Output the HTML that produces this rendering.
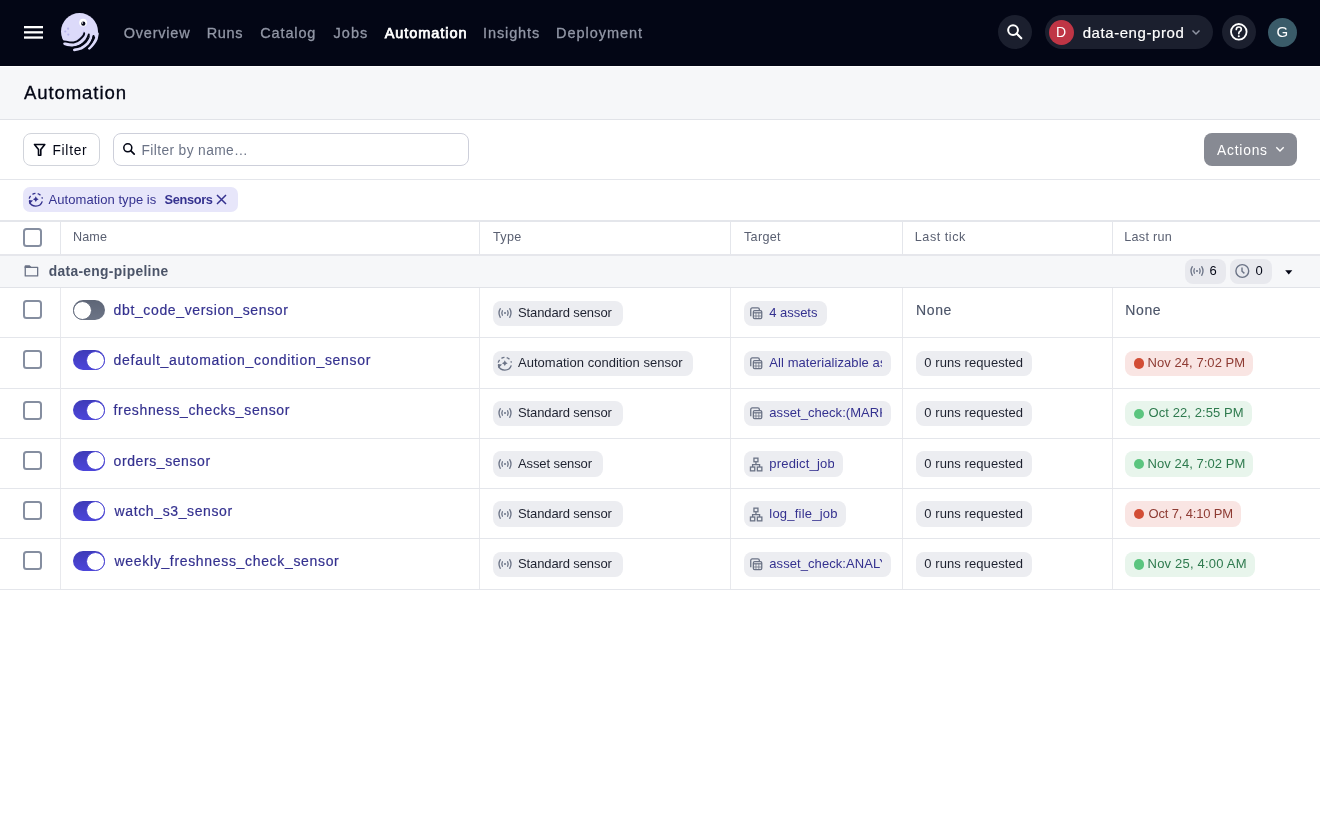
<!DOCTYPE html>
<html><head><meta charset="utf-8"><style>
html,body{margin:0;padding:0;width:1320px;height:822px;overflow:hidden;background:#fff;font-family:"Liberation Sans", sans-serif;}
.t{position:absolute;white-space:nowrap;line-height:1.117;}
</style></head><body><div id="root" style="position:absolute;left:0;top:0;width:1320px;height:822px;overflow:hidden;will-change:transform">
<div style="position:absolute;left:0px;top:0px;width:1320px;height:66px;background:#030615"></div>
<svg style="position:absolute;left:0;top:0" width="60" height="66"><g fill="#fff"><rect x="24" y="26" width="19" height="2.3"/><rect x="24" y="31.2" width="19" height="2.3"/><rect x="24" y="36.4" width="19" height="2.3"/></g></svg>
<svg style="position:absolute;left:55px;top:8px" width="50" height="50" viewBox="0 0 50 50">
<clipPath id="lgc"><path d="M0 0 H50 V33 L41.4 30.6 L38.6 27.6 L35.5 27 L33.5 26.7 Q33 28.5 30.8 30.6 Q28.4 32.8 24.7 35.2 Q21.5 37.3 17.1 37.3 Q13 37 9.6 35.6 L0 35 Z"/></clipPath><circle cx="24.5" cy="23.6" r="18.5" fill="#DCDAFA" clip-path="url(#lgc)"/>
<path d="M22.5 31 Q27.5 28 28.3 22.6 Q30.6 23.5 29.6 27.5 Q28 32 23.5 33 Z" fill="#C9C6F5"/>
<g stroke="#DCDAFA" stroke-width="2.8" fill="none" stroke-linecap="round">
<path d="M9.6 35.6 Q13 37 17.1 37.3 Q21.5 37.3 24.7 35.2 Q28.4 32.8 30.8 30.6 Q33 28.5 33.5 26.7 L34 23.5"/>
<path d="M19.4 41.8 Q23 41.4 26.2 40.3 Q29.6 38.5 32.3 35.8 Q34.6 33 35.9 30 L37 24.5"/>
<path d="M34.3 40.2 Q36.6 38.3 38.3 36 Q40.2 33.5 41.4 30.6 L42.4 25.5"/>
</g>
<g stroke="#030615" stroke-width="1.9" fill="none" stroke-linecap="round">
<path d="M7 33.3 L11.1 33.6 Q15 34.6 18.6 34.5 Q22.5 33.8 24.7 31.5 Q27.6 28.8 28.6 27.4 Q29.2 26.2 29.2 25.2"/>
<path d="M11 39.3 Q16.5 39.9 18.6 39.4 Q22 38.8 24.7 37.9 Q28.4 35.7 30.8 32.7 Q32.8 29.8 33.8 26.4"/>
<path d="M31 40.5 Q32.6 39.4 33.8 38.2 Q35.6 36 36.8 33.6 Q38 30.8 38.6 27.9"/>
</g>
<circle cx="28.1" cy="14.6" r="3.9" fill="#fff"/>
<circle cx="28.3" cy="15.7" r="2.1" fill="#030615"/>
<circle cx="27.5" cy="15" r="0.7" fill="#fff"/>
<g fill="#B8B4EE"><circle cx="13.1" cy="20.7" r="1.1"/><circle cx="10.3" cy="23.5" r="1.1"/><circle cx="13.3" cy="26.6" r="1.1"/></g>
</svg>
<div class="t" style="left:123.70px;top:24.78px;font-size:14.5px;color:#9297A6;font-weight:400;letter-spacing:0.792px;-webkit-text-stroke:0.3px #9297A6">Overview</div>
<div class="t" style="left:206.70px;top:24.78px;font-size:14.5px;color:#9297A6;font-weight:400;letter-spacing:0.667px;-webkit-text-stroke:0.3px #9297A6">Runs</div>
<div class="t" style="left:260.30px;top:24.78px;font-size:14.5px;color:#9297A6;font-weight:400;letter-spacing:0.848px;-webkit-text-stroke:0.3px #9297A6">Catalog</div>
<div class="t" style="left:333.50px;top:24.78px;font-size:14.5px;color:#9297A6;font-weight:400;letter-spacing:1.041px;-webkit-text-stroke:0.3px #9297A6">Jobs</div>
<div class="t" style="left:384.70px;top:24.78px;font-size:14.5px;color:#fff;font-weight:400;letter-spacing:0.946px;-webkit-text-stroke:0.75px #fff">Automation</div>
<div class="t" style="left:483.00px;top:24.78px;font-size:14.5px;color:#9297A6;font-weight:400;letter-spacing:0.897px;-webkit-text-stroke:0.3px #9297A6">Insights</div>
<div class="t" style="left:556.00px;top:24.78px;font-size:14.5px;color:#9297A6;font-weight:400;letter-spacing:0.962px;-webkit-text-stroke:0.3px #9297A6">Deployment</div>
<div style="position:absolute;left:998px;top:15px;width:34px;height:34px;background:#1B1F2E;border-radius:50%"></div>
<svg style="position:absolute;left:998px;top:15px" width="34" height="34"><circle cx="15.05" cy="15.05" r="4.9" stroke="#fff" stroke-width="2" fill="none"/><path d="M18.6 18.6 L23.3 23.3" stroke="#fff" stroke-width="2.1" stroke-linecap="round"/></svg>
<div style="position:absolute;left:1045px;top:15px;width:168px;height:34px;background:#1B1F2E;border-radius:17px"></div>
<div style="position:absolute;left:1048.5px;top:19.5px;width:25.5px;height:25.5px;background:#BF3545;border-radius:50%"></div>
<div class="t" style="left:1056.00px;top:25.03px;font-size:14px;color:#fff;font-weight:400;letter-spacing:0.000px;">D</div>
<div class="t" style="left:1082.70px;top:24.82px;font-size:15px;color:#fff;font-weight:400;letter-spacing:0.567px;-webkit-text-stroke:0.2px #fff">data-eng-prod</div>
<svg style="position:absolute;left:1188px;top:26px" width="16" height="12"><path d="M4.5 4.5 L8 8 L11.5 4.5" stroke="#8F94A3" stroke-width="1.5" fill="none"/></svg>
<div style="position:absolute;left:1222px;top:15px;width:34px;height:34px;background:#1B1F2E;border-radius:50%"></div>
<svg style="position:absolute;left:1222px;top:15px" width="34" height="34"><circle cx="16.8" cy="16.8" r="7.8" stroke="#fff" stroke-width="1.8" fill="none"/><path d="M14.3 14.5 Q14.3 12 16.8 12 Q19.3 12 19.3 14.3 Q19.3 15.8 17.8 16.5 Q16.8 17 16.8 18.6" stroke="#fff" stroke-width="1.7" fill="none" stroke-linecap="round"/><circle cx="16.8" cy="21.3" r="1.05" fill="#fff"/></svg>
<div style="position:absolute;left:1267.5px;top:17.5px;width:29.5px;height:29.5px;background:#3A5B69;border-radius:50%"></div>
<div class="t" style="left:1276.50px;top:24.42px;font-size:15px;color:#fff;font-weight:400;letter-spacing:0.000px;">G</div>
<div style="position:absolute;left:0px;top:66px;width:1320px;height:53px;background:#F6F7F9;border-top:1px solid #fff;box-sizing:border-box"></div>
<div style="position:absolute;left:0px;top:119px;width:1320px;height:1px;background:#E1E3E8"></div>
<div class="t" style="left:23.90px;top:83.17px;font-size:18.6px;color:#030615;font-weight:400;letter-spacing:0.898px;-webkit-text-stroke:0.3px #030615">Automation</div>
<div style="position:absolute;left:23px;top:133px;width:77px;height:33px;box-sizing:border-box;border:1px solid #D1D4DB;border-radius:8px;background:#fff"></div>
<svg style="position:absolute;left:33px;top:143px" width="14" height="14"><path d="M1.5 1.5 H11.8 L7.8 6.6 V12.3 H5.5 V6.6 Z" stroke="#030615" stroke-width="1.6" fill="none" stroke-linejoin="round"/></svg>
<div class="t" style="left:52.40px;top:142.71px;font-size:13.8px;color:#030615;font-weight:400;letter-spacing:0.727px;">Filter</div>
<div style="position:absolute;left:113px;top:133px;width:356px;height:33px;box-sizing:border-box;border:1px solid #CDCFDA;border-radius:8px;background:#fff"></div>
<svg style="position:absolute;left:121px;top:141px" width="16" height="16"><circle cx="6.8" cy="6.8" r="4" stroke="#030615" stroke-width="1.55" fill="none"/><path d="M9.7 9.7 L13.2 13.2" stroke="#030615" stroke-width="1.7" stroke-linecap="round"/></svg>
<div class="t" style="left:141.50px;top:142.71px;font-size:13.8px;color:#6B7386;font-weight:400;letter-spacing:0.371px;">Filter by name…</div>
<div style="position:absolute;left:1204px;top:133px;width:93px;height:33px;background:#878A93;border-radius:8px"></div>
<div class="t" style="left:1217.10px;top:142.81px;font-size:13.8px;color:#fff;font-weight:400;letter-spacing:0.776px;">Actions</div>
<svg style="position:absolute;left:1274px;top:144px" width="12" height="10"><path d="M2.3 3.3 L6 7 L9.7 3.3" stroke="#fff" stroke-width="1.4" fill="none"/></svg>
<div style="position:absolute;left:0px;top:179px;width:1320px;height:1px;background:#E4E6EB"></div>
<div style="position:absolute;left:23px;top:187px;width:215px;height:25px;background:#E7E6FA;border-radius:7px"></div>
<svg style="position:absolute;left:27.7px;top:191.4px" width="16" height="16" viewBox="0 0 16 16"><g stroke="#35328F" stroke-width="1.35" fill="none"><path d="M1.3 10.2 A6.8 6.8 0 0 0 14.3 10.4"/><path d="M1.2 7.6 A6.8 6.8 0 0 1 14.4 7.6" stroke-dasharray="3.1 2.3"/></g><path d="M7.8 5.3 Q8.4 7.6 10.7 8.2 Q8.4 8.8 7.8 11.1 Q7.2 8.8 4.9 8.2 Q7.2 7.6 7.8 5.3 Z" fill="#35328F"/><path d="M0.9 8.9 L5.1 9.5 L1.3 13.3 Z" fill="#35328F"/></svg>
<div class="t" style="left:48.60px;top:192.83px;font-size:13px;color:#35328F;font-weight:400;letter-spacing:0.044px;">Automation type is</div>
<div class="t" style="left:164.50px;top:193.02px;font-size:12.8px;color:#35328F;font-weight:700;letter-spacing:-0.347px;">Sensors</div>
<svg style="position:absolute;left:215px;top:193px" width="13" height="13"><path d="M2 2 L11 11 M11 2 L2 11" stroke="#35328F" stroke-width="1.5"/></svg>
<div style="position:absolute;left:0px;top:220px;width:1320px;height:2px;background:#E4E6EB"></div>
<div style="position:absolute;left:60px;top:222px;width:1px;height:32px;background:#E4E6EB"></div>
<div style="position:absolute;left:479px;top:222px;width:1px;height:32px;background:#E4E6EB"></div>
<div style="position:absolute;left:730.3px;top:222px;width:1px;height:32px;background:#E4E6EB"></div>
<div style="position:absolute;left:902px;top:222px;width:1px;height:32px;background:#E4E6EB"></div>
<div style="position:absolute;left:1111.8px;top:222px;width:1px;height:32px;background:#E4E6EB"></div>
<div style="position:absolute;left:23px;top:228px;width:19px;height:19px;box-sizing:border-box;border:2px solid #858EA0;border-radius:3.5px;background:#fff"></div>
<div class="t" style="left:73.00px;top:230.40px;font-size:12.6px;color:#5A6072;font-weight:400;letter-spacing:0.137px;">Name</div>
<div class="t" style="left:493.00px;top:230.40px;font-size:12.6px;color:#5A6072;font-weight:400;letter-spacing:0.300px;">Type</div>
<div class="t" style="left:744.00px;top:230.40px;font-size:12.6px;color:#5A6072;font-weight:400;letter-spacing:0.300px;">Target</div>
<div class="t" style="left:914.80px;top:230.40px;font-size:12.6px;color:#5A6072;font-weight:400;letter-spacing:0.538px;">Last tick</div>
<div class="t" style="left:1124.20px;top:230.40px;font-size:12.6px;color:#5A6072;font-weight:400;letter-spacing:0.300px;">Last run</div>
<div style="position:absolute;left:0px;top:254px;width:1320px;height:2px;background:#E6E7EC"></div>
<div style="position:absolute;left:0px;top:256px;width:1320px;height:31px;background:#F6F7F9"></div>
<div style="position:absolute;left:0px;top:287px;width:1320px;height:1px;background:#E1E3E8"></div>
<svg style="position:absolute;left:23px;top:264px" width="17" height="15"><path d="M2.25 3.4 H14.65 V11.95 H2.25 Z" stroke="#6B7386" stroke-width="1.3" fill="none" stroke-linejoin="round"/><path d="M1.6 2.3 Q1.6 1.3 2.6 1.3 H6.6 L8.1 2.75 V4.05 H1.6 Z" fill="#6B7386"/></svg>
<div class="t" style="left:48.80px;top:263.61px;font-size:13.8px;color:#4B5468;font-weight:700;letter-spacing:0.322px;">data-eng-pipeline</div>
<div style="position:absolute;left:1185px;top:258.5px;width:41px;height:25.5px;background:#E8E9EE;border-radius:8px"></div>
<svg style="position:absolute;left:1189px;top:265px" width="16" height="12" viewBox="0 0 16 12"><g stroke="#6B7386" stroke-width="1.3" fill="none" stroke-linecap="round"><path d="M3.3 1.7 Q0.7 6 3.3 10.3"/><path d="M12.7 1.7 Q15.3 6 12.7 10.3"/><path d="M5.4 3.8 Q4.2 6 5.4 8.2"/><path d="M10.6 3.8 Q11.8 6 10.6 8.2"/></g><circle cx="8" cy="6" r="1.0" fill="#6B7386"/></svg>
<div class="t" style="left:1209.50px;top:263.94px;font-size:13px;color:#030615;font-weight:400;letter-spacing:0.000px;">6</div>
<div style="position:absolute;left:1230px;top:258.5px;width:41.5px;height:25.5px;background:#E8E9EE;border-radius:8px"></div>
<svg style="position:absolute;left:1234px;top:263px" width="16" height="16"><circle cx="8.3" cy="8" r="6.4" stroke="#6B7386" stroke-width="1.4" fill="none"/><path d="M8 4.5 V8.3 L10.4 10.4" stroke="#6B7386" stroke-width="1.4" fill="none"/></svg>
<div class="t" style="left:1255.50px;top:263.94px;font-size:13px;color:#030615;font-weight:400;letter-spacing:0.000px;">0</div>
<svg style="position:absolute;left:1284px;top:269px" width="10" height="7"><path d="M1.2 1.2 H8.3 L4.75 5.4 Z" fill="#030615"/></svg>
<div style="position:absolute;left:60px;top:288.0px;width:1px;height:50px;background:#E8E9ED"></div>
<div style="position:absolute;left:479px;top:288.0px;width:1px;height:50px;background:#E8E9ED"></div>
<div style="position:absolute;left:730.3px;top:288.0px;width:1px;height:50px;background:#E8E9ED"></div>
<div style="position:absolute;left:902px;top:288.0px;width:1px;height:50px;background:#E8E9ED"></div>
<div style="position:absolute;left:1111.8px;top:288.0px;width:1px;height:50px;background:#E8E9ED"></div>
<div style="position:absolute;left:0px;top:337.3px;width:1320px;height:1px;background:#E4E6EB"></div>
<div style="position:absolute;left:23px;top:300.2px;width:19px;height:19px;box-sizing:border-box;border:2px solid #858EA0;border-radius:3.5px;background:#fff"></div>
<div style="position:absolute;left:73px;top:300.0px;width:32px;height:20px;border-radius:10px;background:linear-gradient(#5E6677,#6C7486)"></div>
<div style="position:absolute;left:73px;top:300.5px;width:19px;height:19px;border-radius:50%;background:#fff;box-sizing:border-box;border:1px solid #646C7E"></div>
<div class="t" style="left:113.60px;top:302.83px;font-size:14px;color:#34318F;font-weight:400;letter-spacing:0.633px;-webkit-text-stroke:0.2px #34318F">dbt_code_version_sensor</div>
<div style="position:absolute;left:492.5px;top:300.5px;width:130px;height:25.5px;background:#ECEDF1;border-radius:8px"></div>
<svg style="position:absolute;left:497px;top:307.0px" width="16" height="12" viewBox="0 0 16 12"><g stroke="#6B7386" stroke-width="1.3" fill="none" stroke-linecap="round"><path d="M3.3 1.7 Q0.7 6 3.3 10.3"/><path d="M12.7 1.7 Q15.3 6 12.7 10.3"/><path d="M5.4 3.8 Q4.2 6 5.4 8.2"/><path d="M10.6 3.8 Q11.8 6 10.6 8.2"/></g><circle cx="8" cy="6" r="1.0" fill="#6B7386"/></svg>
<div class="t" style="left:518.00px;top:305.94px;font-size:13.0px;color:#1E2230;font-weight:400;letter-spacing:-0.112px;">Standard sensor</div>
<div style="position:absolute;left:744px;top:300.5px;width:83px;height:25.5px;background:#ECEDF1;border-radius:8px"></div>
<svg style="position:absolute;left:749.3px;top:305.8px" width="16" height="16" viewBox="0 0 16 16"><g fill="none" stroke="#6B7386" stroke-width="1.3"><path d="M1.75 10.2 V3.5 Q1.75 1.95 3.3 1.95 H8.8 Q10.35 1.95 10.35 3.5 V4.1"/><rect x="4.35" y="4.65" width="8.4" height="8.0" rx="1.3"/></g><g fill="#6B7386"><rect x="4" y="6.2" width="9" height="1.2"/><rect x="4" y="9.6" width="9" height="0.8"/><rect x="6.6" y="6.5" width="0.75" height="6.5"/><rect x="9.5" y="6.5" width="0.75" height="6.5"/></g></svg>
<div class="t" style="left:769.30px;top:305.94px;font-size:13.0px;color:#34318F;font-weight:400;letter-spacing:-0.045px;max-width:50px;overflow:hidden;white-space:nowrap">4 assets</div>
<div class="t" style="left:916.10px;top:303.03px;font-size:14px;color:#4B5468;font-weight:400;letter-spacing:0.606px;-webkit-text-stroke:0.15px #4B5468">None</div>
<div class="t" style="left:1125.30px;top:303.03px;font-size:14px;color:#4B5468;font-weight:400;letter-spacing:0.606px;-webkit-text-stroke:0.15px #4B5468">None</div>
<div style="position:absolute;left:60px;top:338.24px;width:1px;height:50px;background:#E8E9ED"></div>
<div style="position:absolute;left:479px;top:338.24px;width:1px;height:50px;background:#E8E9ED"></div>
<div style="position:absolute;left:730.3px;top:338.24px;width:1px;height:50px;background:#E8E9ED"></div>
<div style="position:absolute;left:902px;top:338.24px;width:1px;height:50px;background:#E8E9ED"></div>
<div style="position:absolute;left:1111.8px;top:338.24px;width:1px;height:50px;background:#E8E9ED"></div>
<div style="position:absolute;left:0px;top:387.54px;width:1320px;height:1px;background:#E4E6EB"></div>
<div style="position:absolute;left:23px;top:350.44px;width:19px;height:19px;box-sizing:border-box;border:2px solid #858EA0;border-radius:3.5px;background:#fff"></div>
<div style="position:absolute;left:73px;top:350.24px;width:32px;height:20px;border-radius:10px;background:linear-gradient(#3E3BB8,#4D46DA)"></div>
<div style="position:absolute;left:86px;top:350.74px;width:19px;height:19px;border-radius:50%;background:#fff;box-sizing:border-box;border:1px solid #4A44D4"></div>
<div class="t" style="left:113.60px;top:353.07px;font-size:14px;color:#34318F;font-weight:400;letter-spacing:0.710px;-webkit-text-stroke:0.2px #34318F">default_automation_condition_sensor</div>
<div style="position:absolute;left:492.5px;top:350.74px;width:200px;height:25.5px;background:#ECEDF1;border-radius:8px"></div>
<svg style="position:absolute;left:497px;top:354.74px" width="16" height="16" viewBox="0 0 16 16"><g stroke="#6B7386" stroke-width="1.35" fill="none"><path d="M1.3 10.2 A6.8 6.8 0 0 0 14.3 10.4"/><path d="M1.2 7.6 A6.8 6.8 0 0 1 14.4 7.6" stroke-dasharray="3.1 2.3"/></g><path d="M7.8 5.3 Q8.4 7.6 10.7 8.2 Q8.4 8.8 7.8 11.1 Q7.2 8.8 4.9 8.2 Q7.2 7.6 7.8 5.3 Z" fill="#6B7386"/><path d="M0.9 8.9 L5.1 9.5 L1.3 13.3 Z" fill="#6B7386"/></svg>
<div class="t" style="left:518.00px;top:356.18px;font-size:13.0px;color:#1E2230;font-weight:400;letter-spacing:0.023px;">Automation condition sensor</div>
<div style="position:absolute;left:744px;top:350.74px;width:146.5px;height:25.5px;background:#ECEDF1;border-radius:8px"></div>
<svg style="position:absolute;left:749.3px;top:356.04px" width="16" height="16" viewBox="0 0 16 16"><g fill="none" stroke="#6B7386" stroke-width="1.3"><path d="M1.75 10.2 V3.5 Q1.75 1.95 3.3 1.95 H8.8 Q10.35 1.95 10.35 3.5 V4.1"/><rect x="4.35" y="4.65" width="8.4" height="8.0" rx="1.3"/></g><g fill="#6B7386"><rect x="4" y="6.2" width="9" height="1.2"/><rect x="4" y="9.6" width="9" height="0.8"/><rect x="6.6" y="6.5" width="0.75" height="6.5"/><rect x="9.5" y="6.5" width="0.75" height="6.5"/></g></svg>
<div class="t" style="left:769.30px;top:356.18px;font-size:13.0px;color:#34318F;font-weight:400;letter-spacing:0.075px;max-width:113px;overflow:hidden;white-space:nowrap">All materializable assets</div>
<div style="position:absolute;left:916px;top:350.74px;width:116px;height:25.5px;background:#ECEDF1;border-radius:8px"></div>
<div class="t" style="left:924.30px;top:356.18px;font-size:13.0px;color:#1E2230;font-weight:400;letter-spacing:0.078px;">0 runs requested</div>
<div style="position:absolute;left:1125px;top:350.74px;width:128px;height:25.5px;background:#F9E5E3;border-radius:8px"></div>
<div style="position:absolute;left:1133.7px;top:358.44px;width:10.3px;height:10.3px;background:#D24D35;border-radius:50%"></div>
<div class="t" style="left:1147.60px;top:356.18px;font-size:13.0px;color:#8E3B33;font-weight:400;letter-spacing:0.050px;">Nov 24, 7:02 PM</div>
<div style="position:absolute;left:60px;top:388.48px;width:1px;height:50px;background:#E8E9ED"></div>
<div style="position:absolute;left:479px;top:388.48px;width:1px;height:50px;background:#E8E9ED"></div>
<div style="position:absolute;left:730.3px;top:388.48px;width:1px;height:50px;background:#E8E9ED"></div>
<div style="position:absolute;left:902px;top:388.48px;width:1px;height:50px;background:#E8E9ED"></div>
<div style="position:absolute;left:1111.8px;top:388.48px;width:1px;height:50px;background:#E8E9ED"></div>
<div style="position:absolute;left:0px;top:437.78px;width:1320px;height:1px;background:#E4E6EB"></div>
<div style="position:absolute;left:23px;top:400.68px;width:19px;height:19px;box-sizing:border-box;border:2px solid #858EA0;border-radius:3.5px;background:#fff"></div>
<div style="position:absolute;left:73px;top:400.48px;width:32px;height:20px;border-radius:10px;background:linear-gradient(#3E3BB8,#4D46DA)"></div>
<div style="position:absolute;left:86px;top:400.98px;width:19px;height:19px;border-radius:50%;background:#fff;box-sizing:border-box;border:1px solid #4A44D4"></div>
<div class="t" style="left:113.60px;top:403.31px;font-size:14px;color:#34318F;font-weight:400;letter-spacing:0.636px;-webkit-text-stroke:0.2px #34318F">freshness_checks_sensor</div>
<div style="position:absolute;left:492.5px;top:400.98px;width:130px;height:25.5px;background:#ECEDF1;border-radius:8px"></div>
<svg style="position:absolute;left:497px;top:407.48px" width="16" height="12" viewBox="0 0 16 12"><g stroke="#6B7386" stroke-width="1.3" fill="none" stroke-linecap="round"><path d="M3.3 1.7 Q0.7 6 3.3 10.3"/><path d="M12.7 1.7 Q15.3 6 12.7 10.3"/><path d="M5.4 3.8 Q4.2 6 5.4 8.2"/><path d="M10.6 3.8 Q11.8 6 10.6 8.2"/></g><circle cx="8" cy="6" r="1.0" fill="#6B7386"/></svg>
<div class="t" style="left:518.00px;top:406.42px;font-size:13.0px;color:#1E2230;font-weight:400;letter-spacing:-0.112px;">Standard sensor</div>
<div style="position:absolute;left:744px;top:400.98px;width:146.5px;height:25.5px;background:#ECEDF1;border-radius:8px"></div>
<svg style="position:absolute;left:749.3px;top:406.28000000000003px" width="16" height="16" viewBox="0 0 16 16"><g fill="none" stroke="#6B7386" stroke-width="1.3"><path d="M1.75 10.2 V3.5 Q1.75 1.95 3.3 1.95 H8.8 Q10.35 1.95 10.35 3.5 V4.1"/><rect x="4.35" y="4.65" width="8.4" height="8.0" rx="1.3"/></g><g fill="#6B7386"><rect x="4" y="6.2" width="9" height="1.2"/><rect x="4" y="9.6" width="9" height="0.8"/><rect x="6.6" y="6.5" width="0.75" height="6.5"/><rect x="9.5" y="6.5" width="0.75" height="6.5"/></g></svg>
<div class="t" style="left:769.30px;top:406.42px;font-size:13.0px;color:#34318F;font-weight:400;letter-spacing:0.053px;max-width:113px;overflow:hidden;white-space:nowrap">asset_check:(MARKET</div>
<div style="position:absolute;left:916px;top:400.98px;width:116px;height:25.5px;background:#ECEDF1;border-radius:8px"></div>
<div class="t" style="left:924.30px;top:406.42px;font-size:13.0px;color:#1E2230;font-weight:400;letter-spacing:0.078px;">0 runs requested</div>
<div style="position:absolute;left:1125px;top:400.98px;width:126.5px;height:25.5px;background:#E8F5EC;border-radius:8px"></div>
<div style="position:absolute;left:1133.7px;top:408.68px;width:10.3px;height:10.3px;background:#5BC57F;border-radius:50%"></div>
<div class="t" style="left:1148.60px;top:406.42px;font-size:13.0px;color:#2E7A4E;font-weight:400;letter-spacing:0.071px;">Oct 22, 2:55 PM</div>
<div style="position:absolute;left:60px;top:438.72px;width:1px;height:50px;background:#E8E9ED"></div>
<div style="position:absolute;left:479px;top:438.72px;width:1px;height:50px;background:#E8E9ED"></div>
<div style="position:absolute;left:730.3px;top:438.72px;width:1px;height:50px;background:#E8E9ED"></div>
<div style="position:absolute;left:902px;top:438.72px;width:1px;height:50px;background:#E8E9ED"></div>
<div style="position:absolute;left:1111.8px;top:438.72px;width:1px;height:50px;background:#E8E9ED"></div>
<div style="position:absolute;left:0px;top:488.02px;width:1320px;height:1px;background:#E4E6EB"></div>
<div style="position:absolute;left:23px;top:450.92px;width:19px;height:19px;box-sizing:border-box;border:2px solid #858EA0;border-radius:3.5px;background:#fff"></div>
<div style="position:absolute;left:73px;top:450.72px;width:32px;height:20px;border-radius:10px;background:linear-gradient(#3E3BB8,#4D46DA)"></div>
<div style="position:absolute;left:86px;top:451.22px;width:19px;height:19px;border-radius:50%;background:#fff;box-sizing:border-box;border:1px solid #4A44D4"></div>
<div class="t" style="left:113.60px;top:453.55px;font-size:14px;color:#34318F;font-weight:400;letter-spacing:0.581px;-webkit-text-stroke:0.2px #34318F">orders_sensor</div>
<div style="position:absolute;left:492.5px;top:451.22px;width:110px;height:25.5px;background:#ECEDF1;border-radius:8px"></div>
<svg style="position:absolute;left:497px;top:457.72px" width="16" height="12" viewBox="0 0 16 12"><g stroke="#6B7386" stroke-width="1.3" fill="none" stroke-linecap="round"><path d="M3.3 1.7 Q0.7 6 3.3 10.3"/><path d="M12.7 1.7 Q15.3 6 12.7 10.3"/><path d="M5.4 3.8 Q4.2 6 5.4 8.2"/><path d="M10.6 3.8 Q11.8 6 10.6 8.2"/></g><circle cx="8" cy="6" r="1.0" fill="#6B7386"/></svg>
<div class="t" style="left:518.00px;top:456.66px;font-size:13.0px;color:#1E2230;font-weight:400;letter-spacing:-0.101px;">Asset sensor</div>
<div style="position:absolute;left:744px;top:451.22px;width:98.5px;height:25.5px;background:#ECEDF1;border-radius:8px"></div>
<svg style="position:absolute;left:749.3px;top:457.12px" width="16" height="16" viewBox="0 0 16 16"><g fill="none" stroke="#6B7386" stroke-width="1.3"><rect x="4.95" y="1.15" width="4.0" height="3.6"/><rect x="1.45" y="10.05" width="4.3" height="3.8"/><rect x="8.35" y="10.05" width="4.5" height="3.8"/><path d="M6.95 4.8 V7.7 M3.6 10 V7.7 H10.6 V10"/></g></svg>
<div class="t" style="left:769.30px;top:456.66px;font-size:13.0px;color:#34318F;font-weight:400;letter-spacing:0.183px;max-width:65px;overflow:hidden;white-space:nowrap">predict_job</div>
<div style="position:absolute;left:916px;top:451.22px;width:116px;height:25.5px;background:#ECEDF1;border-radius:8px"></div>
<div class="t" style="left:924.30px;top:456.66px;font-size:13.0px;color:#1E2230;font-weight:400;letter-spacing:0.078px;">0 runs requested</div>
<div style="position:absolute;left:1125px;top:451.22px;width:128px;height:25.5px;background:#E8F5EC;border-radius:8px"></div>
<div style="position:absolute;left:1133.7px;top:458.92px;width:10.3px;height:10.3px;background:#5BC57F;border-radius:50%"></div>
<div class="t" style="left:1147.60px;top:456.66px;font-size:13.0px;color:#2E7A4E;font-weight:400;letter-spacing:0.072px;">Nov 24, 7:02 PM</div>
<div style="position:absolute;left:60px;top:488.96px;width:1px;height:50px;background:#E8E9ED"></div>
<div style="position:absolute;left:479px;top:488.96px;width:1px;height:50px;background:#E8E9ED"></div>
<div style="position:absolute;left:730.3px;top:488.96px;width:1px;height:50px;background:#E8E9ED"></div>
<div style="position:absolute;left:902px;top:488.96px;width:1px;height:50px;background:#E8E9ED"></div>
<div style="position:absolute;left:1111.8px;top:488.96px;width:1px;height:50px;background:#E8E9ED"></div>
<div style="position:absolute;left:0px;top:538.26px;width:1320px;height:1px;background:#E4E6EB"></div>
<div style="position:absolute;left:23px;top:501.16px;width:19px;height:19px;box-sizing:border-box;border:2px solid #858EA0;border-radius:3.5px;background:#fff"></div>
<div style="position:absolute;left:73px;top:500.96px;width:32px;height:20px;border-radius:10px;background:linear-gradient(#3E3BB8,#4D46DA)"></div>
<div style="position:absolute;left:86px;top:501.46px;width:19px;height:19px;border-radius:50%;background:#fff;box-sizing:border-box;border:1px solid #4A44D4"></div>
<div class="t" style="left:114.60px;top:503.79px;font-size:14px;color:#34318F;font-weight:400;letter-spacing:0.615px;-webkit-text-stroke:0.2px #34318F">watch_s3_sensor</div>
<div style="position:absolute;left:492.5px;top:501.46px;width:130px;height:25.5px;background:#ECEDF1;border-radius:8px"></div>
<svg style="position:absolute;left:497px;top:507.96px" width="16" height="12" viewBox="0 0 16 12"><g stroke="#6B7386" stroke-width="1.3" fill="none" stroke-linecap="round"><path d="M3.3 1.7 Q0.7 6 3.3 10.3"/><path d="M12.7 1.7 Q15.3 6 12.7 10.3"/><path d="M5.4 3.8 Q4.2 6 5.4 8.2"/><path d="M10.6 3.8 Q11.8 6 10.6 8.2"/></g><circle cx="8" cy="6" r="1.0" fill="#6B7386"/></svg>
<div class="t" style="left:518.00px;top:506.89px;font-size:13.0px;color:#1E2230;font-weight:400;letter-spacing:-0.112px;">Standard sensor</div>
<div style="position:absolute;left:744px;top:501.46px;width:102px;height:25.5px;background:#ECEDF1;border-radius:8px"></div>
<svg style="position:absolute;left:749.3px;top:507.35999999999996px" width="16" height="16" viewBox="0 0 16 16"><g fill="none" stroke="#6B7386" stroke-width="1.3"><rect x="4.95" y="1.15" width="4.0" height="3.6"/><rect x="1.45" y="10.05" width="4.3" height="3.8"/><rect x="8.35" y="10.05" width="4.5" height="3.8"/><path d="M6.95 4.8 V7.7 M3.6 10 V7.7 H10.6 V10"/></g></svg>
<div class="t" style="left:769.30px;top:506.89px;font-size:13.0px;color:#34318F;font-weight:400;letter-spacing:0.223px;max-width:69px;overflow:hidden;white-space:nowrap">log_file_job</div>
<div style="position:absolute;left:916px;top:501.46px;width:116px;height:25.5px;background:#ECEDF1;border-radius:8px"></div>
<div class="t" style="left:924.30px;top:506.89px;font-size:13.0px;color:#1E2230;font-weight:400;letter-spacing:0.078px;">0 runs requested</div>
<div style="position:absolute;left:1125px;top:501.46px;width:115.5px;height:25.5px;background:#F9E5E3;border-radius:8px"></div>
<div style="position:absolute;left:1133.7px;top:509.15999999999997px;width:10.3px;height:10.3px;background:#D24D35;border-radius:50%"></div>
<div class="t" style="left:1148.60px;top:506.89px;font-size:13.0px;color:#8E3B33;font-weight:400;letter-spacing:-0.167px;">Oct 7, 4:10 PM</div>
<div style="position:absolute;left:60px;top:539.2px;width:1px;height:50px;background:#E8E9ED"></div>
<div style="position:absolute;left:479px;top:539.2px;width:1px;height:50px;background:#E8E9ED"></div>
<div style="position:absolute;left:730.3px;top:539.2px;width:1px;height:50px;background:#E8E9ED"></div>
<div style="position:absolute;left:902px;top:539.2px;width:1px;height:50px;background:#E8E9ED"></div>
<div style="position:absolute;left:1111.8px;top:539.2px;width:1px;height:50px;background:#E8E9ED"></div>
<div style="position:absolute;left:0px;top:588.5px;width:1320px;height:1px;background:#E4E6EB"></div>
<div style="position:absolute;left:23px;top:551.4px;width:19px;height:19px;box-sizing:border-box;border:2px solid #858EA0;border-radius:3.5px;background:#fff"></div>
<div style="position:absolute;left:73px;top:551.2px;width:32px;height:20px;border-radius:10px;background:linear-gradient(#3E3BB8,#4D46DA)"></div>
<div style="position:absolute;left:86px;top:551.7px;width:19px;height:19px;border-radius:50%;background:#fff;box-sizing:border-box;border:1px solid #4A44D4"></div>
<div class="t" style="left:114.60px;top:554.03px;font-size:14px;color:#34318F;font-weight:400;letter-spacing:0.669px;-webkit-text-stroke:0.2px #34318F">weekly_freshness_check_sensor</div>
<div style="position:absolute;left:492.5px;top:551.7px;width:130px;height:25.5px;background:#ECEDF1;border-radius:8px"></div>
<svg style="position:absolute;left:497px;top:558.2px" width="16" height="12" viewBox="0 0 16 12"><g stroke="#6B7386" stroke-width="1.3" fill="none" stroke-linecap="round"><path d="M3.3 1.7 Q0.7 6 3.3 10.3"/><path d="M12.7 1.7 Q15.3 6 12.7 10.3"/><path d="M5.4 3.8 Q4.2 6 5.4 8.2"/><path d="M10.6 3.8 Q11.8 6 10.6 8.2"/></g><circle cx="8" cy="6" r="1.0" fill="#6B7386"/></svg>
<div class="t" style="left:518.00px;top:557.14px;font-size:13.0px;color:#1E2230;font-weight:400;letter-spacing:-0.112px;">Standard sensor</div>
<div style="position:absolute;left:744px;top:551.7px;width:146.5px;height:25.5px;background:#ECEDF1;border-radius:8px"></div>
<svg style="position:absolute;left:749.3px;top:557.0px" width="16" height="16" viewBox="0 0 16 16"><g fill="none" stroke="#6B7386" stroke-width="1.3"><path d="M1.75 10.2 V3.5 Q1.75 1.95 3.3 1.95 H8.8 Q10.35 1.95 10.35 3.5 V4.1"/><rect x="4.35" y="4.65" width="8.4" height="8.0" rx="1.3"/></g><g fill="#6B7386"><rect x="4" y="6.2" width="9" height="1.2"/><rect x="4" y="9.6" width="9" height="0.8"/><rect x="6.6" y="6.5" width="0.75" height="6.5"/><rect x="9.5" y="6.5" width="0.75" height="6.5"/></g></svg>
<div class="t" style="left:769.30px;top:557.14px;font-size:13.0px;color:#34318F;font-weight:400;letter-spacing:0.073px;max-width:113px;overflow:hidden;white-space:nowrap">asset_check:ANALYTICS</div>
<div style="position:absolute;left:916px;top:551.7px;width:116px;height:25.5px;background:#ECEDF1;border-radius:8px"></div>
<div class="t" style="left:924.30px;top:557.14px;font-size:13.0px;color:#1E2230;font-weight:400;letter-spacing:0.078px;">0 runs requested</div>
<div style="position:absolute;left:1125px;top:551.7px;width:130px;height:25.5px;background:#E8F5EC;border-radius:8px"></div>
<div style="position:absolute;left:1133.7px;top:559.4000000000001px;width:10.3px;height:10.3px;background:#5BC57F;border-radius:50%"></div>
<div class="t" style="left:1147.60px;top:557.14px;font-size:13.0px;color:#2E7A4E;font-weight:400;letter-spacing:0.200px;">Nov 25, 4:00 AM</div>
</div></body></html>
